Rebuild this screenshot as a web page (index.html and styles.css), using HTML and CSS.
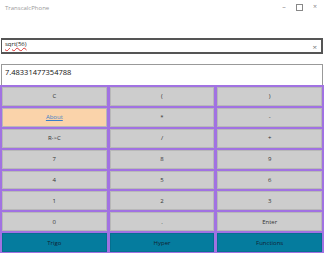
FILE: index.html
```html
<!DOCTYPE html>
<html lang="en">
<head>
  <meta charset="UTF-8">
  <title>TranscalcPhone</title>
  <link rel="stylesheet" href="styles.css">
</head>
<body>
  <div class="window">
    <div class="titlebar">
      <span class="title">TranscalcPhone</span>
      <div class="controls">
        <span class="ctl">&#8211;</span>
        <span class="ctl box"></span>
        <span class="ctl">&#215;</span>
      </div>
    </div>

    <div class="entry">
      <span class="expr">sqrt(56)</span>
      <span class="clear">&#215;</span>
    </div>

    <div class="output">7.48331477354788</div>

    <div class="keys">
      <button>C</button>
      <button>(</button>
      <button>)</button>
      <button class="about"><a href="#">About</a></button>
      <button>*</button>
      <button>-</button>
      <button>R-&gt;C</button>
      <button>/</button>
      <button>+</button>
      <button>7</button>
      <button>8</button>
      <button>9</button>
      <button>4</button>
      <button>5</button>
      <button>6</button>
      <button>1</button>
      <button>2</button>
      <button>3</button>
      <button>0</button>
      <button>.</button>
      <button>Enter</button>
      <button class="mode">Trigo</button>
      <button class="mode">Hyper</button>
      <button class="mode">Functions</button>
    </div>
  </div>
</body>
</html>
```

FILE: styles.css
```css
body { margin: 0; font-family: "Open Sans", "Noto Sans", sans-serif; background: white; }
.window { height: 253px; display: flex; flex-direction: column; overflow: hidden; }

.titlebar { height: 38px; display: flex; justify-content: space-between; align-items: flex-start; }
.title { font-size: 6px; color: #999; margin: 4px 0 0 5px; }
.controls { display: flex; gap: 9px; margin: 2px 6px 0 0; }
.ctl { font-size: 7px; color: #888; width: 6px; text-align: center; }
.ctl.box { width: 5px; height: 5px; border: 1px solid #888; margin-top: 2px; }

.entry { height: 12px; border: 2px solid #555; border-left-width: 1px; margin: 0 1px; display: flex; justify-content: space-between; align-items: center; padding: 0 4px 0 3px; }
.expr { font-size: 6px; color: #222; text-decoration: underline wavy #d33; text-decoration-thickness: 1px; margin-top: -5px; }
.clear { font-size: 8px; color: #777; }

.output { margin: 10px 1px 0; height: 18px; border: 1px solid #999; border-bottom: 0; font-size: 7.5px; color: #111; padding: 2px 3px 0; }

.keys { flex: 1; display: grid; grid-template-columns: repeat(3, 1fr); grid-template-rows: repeat(8, 1fr); gap: 2px 3px; padding: 2px 2px 1px; background: #a172e2; }
.keys button { border: 1px solid #b8b8b8; background: #cdcdcd; font-family: inherit; font-size: 6px; color: #333; padding: 0; }
.keys .about { background: #fad3aa; }
.keys .about a { color: #3a7fc8; }
.keys .mode { background: #057c9e; color: #123; border-color: #05708f; }
```
